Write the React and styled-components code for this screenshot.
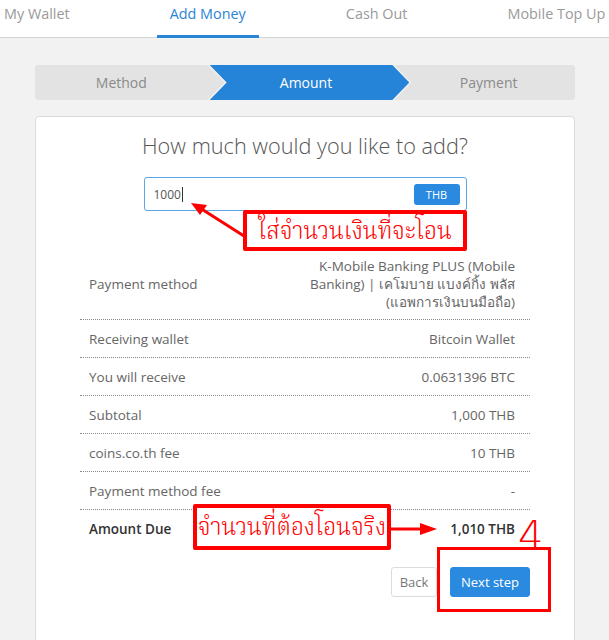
import React from "react";
import styled, { createGlobalStyle } from "styled-components";

const Global = createGlobalStyle`
  html, body { margin: 0; padding: 0; background: #f2f2f2; }
  body { font-family: "Open Sans", "Noto Sans", sans-serif; }
  * { box-sizing: border-box; }
`;

const Page = styled.div`
  position: relative;
  width: 609px;
  height: 640px;
  overflow: hidden;
  background: #f2f2f2;
`;

const Nav = styled.nav`
  display: flex;
  gap: 74px;
  height: 38px;
  background: #fff;
  border-bottom: 1px solid #d4d4d4;
  margin-left: -9px;
`;

const Tab = styled.div`
  padding: 4px 13px 0;
  height: 38px;
  line-height: 20px;
  font-size: 14.4px;
  color: ${(p) => (p.$active ? "#2a84d6" : "#9a9a9a")};
  border-bottom: 3px solid ${(p) => (p.$active ? "#2a84d6" : "transparent")};
  white-space: nowrap;
`;

const Main = styled.div`
  padding: 27px 34px 0 35px;
`;

const Stepper = styled.div`
  display: flex;
  height: 35px;
`;

const Step = styled.div`
  flex: 1;
  margin-left: ${(p) => (p.$first ? "0" : "-15px")};
  display: flex;
  align-items: center;
  justify-content: center;
  padding-left: ${(p) => (p.$first ? "0" : p.$last ? "8px" : "10px")};
  padding-right: ${(p) => (p.$last ? "0" : "17px")};
  font-size: 14px;
  background: ${(p) => (p.$active ? "#2583d8" : "#e3e3e3")};
  color: ${(p) => (p.$active ? "#fff" : "#8a8a8a")};
  border-radius: ${(p) => (p.$first ? "3px 0 0 3px" : p.$last ? "0 3px 3px 0" : "0")};
  clip-path: ${(p) =>
    p.$first
      ? "polygon(0 0, calc(100% - 17px) 0, 100% 50%, calc(100% - 17px) 100%, 0 100%)"
      : p.$last
      ? "polygon(0 0, 100% 0, 100% 100%, 0 100%, 17px 50%)"
      : "polygon(0 0, calc(100% - 17px) 0, 100% 50%, calc(100% - 17px) 100%, 0 100%, 17px 50%)"};
`;

const Card = styled.div`
  margin-top: 16px;
  background: #fff;
  border: 1px solid #dcdcdc;
  border-radius: 4px;
  height: 560px;
  padding-top: 14px;
  display: flex;
  flex-direction: column;
  align-items: center;
`;

const Heading = styled.h2`
  margin: 0;
  font-weight: 300;
  font-size: 21.7px;
  line-height: 30px;
  color: #555;
`;

const InputBox = styled.div`
  margin-top: 16px;
  width: 323px;
  height: 34px;
  border: 1px solid #5aa6e8;
  border-radius: 3px;
  display: flex;
  align-items: center;
  justify-content: space-between;
  padding: 0 6px 0 9px;
`;

const InputText = styled.span`
  font-size: 12px;
  color: #555;
  display: flex;
  align-items: center;
`;

const Caret = styled.span`
  display: inline-block;
  width: 1px;
  height: 15px;
  background: #333;
  margin-left: 1px;
`;

const Addon = styled.span`
  background: #2a8ae0;
  color: #fff;
  font-size: 11px;
  border-radius: 3px;
  width: 46px;
  height: 21px;
  display: flex;
  align-items: center;
  justify-content: center;
`;

const Table = styled.div`
  margin-top: 37px;
  width: 450px;
`;

const Row = styled.div`
  display: flex;
  justify-content: space-between;
  align-items: center;
  padding: 9px 15px 8px 9px;
  font-size: 13.5px;
  line-height: 20px;
  color: ${(p) => (p.$strong ? "#333" : "#666")};
  font-weight: ${(p) => (p.$strong ? 600 : 400)};
  border-bottom: ${(p) => (p.$last ? "none" : "1px dotted #8a8a8a")};
`;

const Value = styled.div`
  text-align: right;
  line-height: 18px;
`;

const Buttons = styled.div`
  width: 450px;
  display: flex;
  justify-content: flex-end;
  gap: 13px;
  margin-top: 20px;
`;

const Button = styled.button`
  height: 30px;
  width: ${(p) => (p.$primary ? "80px" : "46px")};
  padding: 0;
  border-radius: 3px;
  font-family: inherit;
  font-size: 13px;
  border: 1px solid ${(p) => (p.$primary ? "#2a8ae0" : "#dcdcdc")};
  background: ${(p) => (p.$primary ? "#2a8ae0" : "#fff")};
  color: ${(p) => (p.$primary ? "#fff" : "#777")};
`;

const Note = styled.div`
  position: absolute;
  left: ${(p) => p.$x}px;
  top: ${(p) => p.$y}px;
  width: ${(p) => p.$w}px;
  height: ${(p) => p.$h}px;
  border: 4px solid #ff0000;
  border-radius: 2px;
  background: #fff;
  color: #ff0000;
  font-family: "Norasi", "Noto Serif Thai", "Noto Sans Thai", "Loma", serif;
  font-size: ${(p) => p.$size}px;
  font-weight: 300;
  line-height: 1;
  padding-top: ${(p) => p.$pt || 0}px;
  display: flex;
  align-items: center;
  justify-content: center;
  white-space: nowrap;
`;

const NoteText = styled.span`
  display: inline-block;
  transform: scaleY(1.1);
`;

const Frame = styled.div`
  position: absolute;
  left: 437px;
  top: 547px;
  width: 114px;
  height: 65px;
  border: 3px solid #ff0000;
`;

const Four = styled.div`
  position: absolute;
  left: 518px;
  top: 514px;
  font-family: "DejaVu Sans", sans-serif;
  font-weight: 300;
  font-size: 40px;
  line-height: 44px;
  color: #ff0000;
`;

const Overlay = styled.svg`
  position: absolute;
  left: 0;
  top: 0;
  pointer-events: none;
`;

export default function App() {
  return (
    <>
      <Global />
      <Page>
        <Nav>
          <Tab>My Wallet</Tab>
          <Tab $active>Add Money</Tab>
          <Tab>Cash Out</Tab>
          <Tab>Mobile Top Up</Tab>
        </Nav>
        <Main>
          <Stepper>
            <Step $first>Method</Step>
            <Step $active>Amount</Step>
            <Step $last>Payment</Step>
          </Stepper>
          <Card>
            <Heading>How much would you like to add?</Heading>
            <InputBox>
              <InputText>
                1000
                <Caret />
              </InputText>
              <Addon>THB</Addon>
            </InputBox>
            <Table>
              <Row>
                <span>Payment method</span>
                <Value>
                  K-Mobile Banking PLUS (Mobile
                  <br />
                  Banking) | เคโมบาย แบงค์กิ้ง พลัส
                  <br />
                  (แอพการเงินบนมือถือ)
                </Value>
              </Row>
              <Row>
                <span>Receiving wallet</span>
                <Value>Bitcoin Wallet</Value>
              </Row>
              <Row>
                <span>You will receive</span>
                <Value>0.0631396 BTC</Value>
              </Row>
              <Row>
                <span>Subtotal</span>
                <Value>1,000 THB</Value>
              </Row>
              <Row>
                <span>coins.co.th fee</span>
                <Value>10 THB</Value>
              </Row>
              <Row>
                <span>Payment method fee</span>
                <Value>-</Value>
              </Row>
              <Row $strong $last>
                <span>Amount Due</span>
                <Value>1,010 THB</Value>
              </Row>
            </Table>
            <Buttons>
              <Button>Back</Button>
              <Button $primary>Next step</Button>
            </Buttons>
          </Card>
        </Main>

        <Overlay width="609" height="640" viewBox="0 0 609 640">
          <line x1="244" y1="236" x2="200" y2="208" stroke="#f00" strokeWidth="3" />
          <polygon points="191,203 207,205 200,215" fill="#f00" />
          <line x1="390" y1="529" x2="422" y2="529" stroke="#f00" strokeWidth="3" />
          <polygon points="437,529 420,523 420,535" fill="#f00" />
        </Overlay>
        <Note $x={243} $y={210} $w={224} $h={41} $size={23} $pt={3}>
          <NoteText>ใส่จำนวนเงินที่จะโอน</NoteText>
        </Note>
        <Note $x={193} $y={504} $w={198} $h={46} $size={23} $pt={2}>
          <NoteText>จำนวนที่ต้องโอนจริง</NoteText>
        </Note>
        <Four>4.</Four>
        <Frame />
      </Page>
    </>
  );
}
